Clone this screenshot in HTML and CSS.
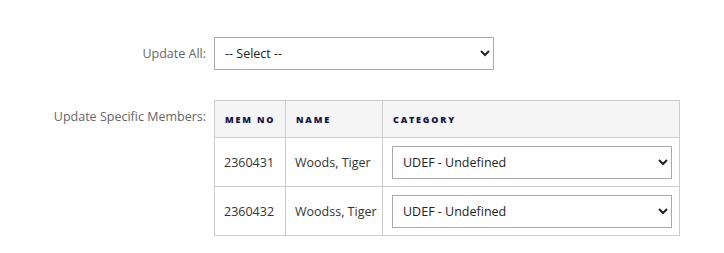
FILE: index.html
```html
<!DOCTYPE html>
<html>
<head>
    <meta charset="utf-8" />
    <title>Update Category</title>
    <link rel="stylesheet" href="styles.css">
</head>
<body>
    <form class="update-form">
        <!-- 全部更新 -->
        <div class="form-row">
            <label class="form-label" for="updateAll">Update All:</label>
            <select id="updateAll" class="select-all">
                <option>-- Select --</option>
            </select>
        </div>

        <!-- 单个成员更新 -->
        <div class="form-row form-row-top">
            <span class="form-label label-members">Update Specific Members:</span>
            <table class="members-table">
                <colgroup>
                    <col class="col-no">
                    <col class="col-name">
                    <col class="col-cat">
                </colgroup>
                <thead>
                    <tr>
                        <th>Mem No</th>
                        <th>Name</th>
                        <th>Category</th>
                    </tr>
                </thead>
                <tbody>
                    <tr>
                        <td>2360431</td>
                        <td>Woods, Tiger</td>
                        <td>
                            <select class="select-cat">
                                <option>UDEF - Undefined</option>
                            </select>
                        </td>
                    </tr>
                    <tr>
                        <td>2360432</td>
                        <td>Woodss, Tiger</td>
                        <td>
                            <select class="select-cat">
                                <option>UDEF - Undefined</option>
                            </select>
                        </td>
                    </tr>
                </tbody>
            </table>
        </div>
    </form>
</body>
</html>
```

FILE: styles.css
```css
/* 全局样式 */
body {
    margin: 0;
    background-color: #ffffff;
    font-family: "Open Sans", "Noto Sans", Arial, sans-serif;
    font-size: 12.5px;
    color: #333;
}

.update-form {
    padding-top: 37px;
    display: flex;
    flex-direction: column;
    gap: 30px;
}

/* 表单行 */
.form-row {
    display: grid;
    grid-template-columns: 206px auto;
    column-gap: 8px;
    align-items: center;
}

.form-row-top {
    align-items: start;
}

.form-label {
    text-align: right;
    color: #666;
}

.label-members {
    padding-top: 8px;
}

/* 下拉框 */
select {
    font-family: inherit;
    font-size: 12.5px;
    color: #222;
    background-color: #fff;
    border: 1px solid #aaa;
    border-radius: 0;
    height: 33px;
    padding: 0 6px;
    outline: none;
}

.select-all {
    width: 280px;
}

.select-cat {
    width: 280px;
    display: block;
}

/* 成员表格 */
.members-table {
    border-collapse: collapse;
    border: 1px solid #ccc;
    width: 466px;
    table-layout: fixed;
}

.col-no {
    width: 71px;
}

.col-name {
    width: 97px;
}

.members-table th,
.members-table td {
    border: 1px solid #ccc;
    text-align: left;
    padding: 0 9px;
    white-space: nowrap;
}

.members-table th {
    height: 36px;
    background-color: #f5f5f5;
    color: #14144a;
    font-size: 9px;
    font-weight: 800;
    text-transform: uppercase;
    letter-spacing: 1.8px;
    padding-left: 10px;
}

.members-table td {
    height: 47px;
    color: #333;
}

.members-table td:last-child {
    padding-top: 1px;
}
```
